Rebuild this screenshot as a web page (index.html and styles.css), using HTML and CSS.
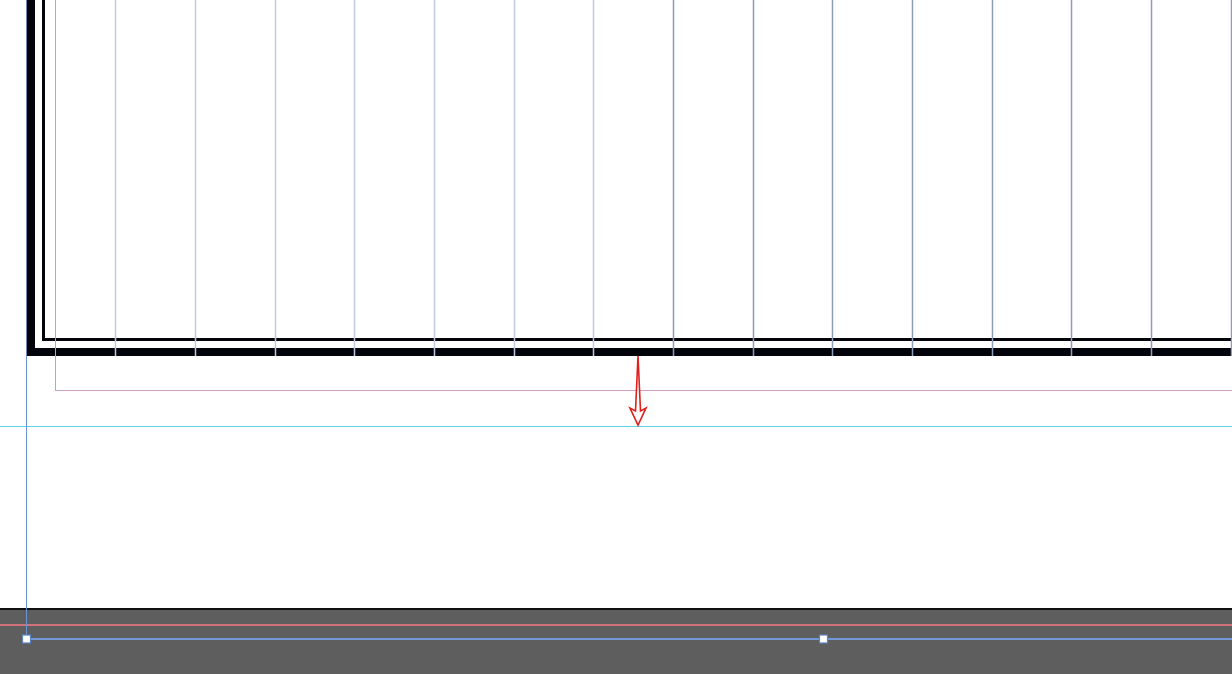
FILE: index.html
```html
<!DOCTYPE html>
<html lang="en">
<head>
    <meta charset="UTF-8">
    <meta name="viewport" content="width=device-width, initial-scale=1.0">
    <title>Layout view</title>
    <link rel="stylesheet" href="styles.css">
</head>
<body>

    <div class="workspace">
        <!-- page area (white) -->
        <div class="page-area"></div>
        <!-- pasteboard (grey) -->
        <div class="pasteboard"></div>

        <!-- guides, frame and selection drawn on top -->
        <svg class="overlay" width="1232" height="674" viewBox="0 0 1232 674">
            <!-- frame bars -->
            <rect class="bar" x="27" y="0" width="8" height="356"/>
            <rect class="bar" x="27" y="348" width="1205" height="8"/>
            <rect class="bar" x="42" y="0" width="3" height="341"/>
            <rect class="bar" x="42" y="338" width="1190" height="3"/>
            <line class="bar-edge" x1="26.5" y1="0" x2="26.5" y2="356"/>

            <!-- column guides -->
            <g class="col-light">
                <line x1="115.5" y1="0" x2="115.5" y2="356"/>
                <line x1="195.5" y1="0" x2="195.5" y2="356"/>
                <line x1="275.5" y1="0" x2="275.5" y2="356"/>
                <line x1="354.5" y1="0" x2="354.5" y2="356"/>
                <line x1="434.5" y1="0" x2="434.5" y2="356"/>
                <line x1="514.5" y1="0" x2="514.5" y2="356"/>
                <line x1="593.5" y1="0" x2="593.5" y2="356"/>
            </g>
            <g class="col-dark">
                <line x1="673.5" y1="0" x2="673.5" y2="356"/>
                <line x1="753.5" y1="0" x2="753.5" y2="356"/>
                <line x1="832.5" y1="0" x2="832.5" y2="356"/>
                <line x1="912.5" y1="0" x2="912.5" y2="356"/>
                <line x1="992.5" y1="0" x2="992.5" y2="356"/>
                <line x1="1071.5" y1="0" x2="1071.5" y2="356"/>
                <line x1="1151.5" y1="0" x2="1151.5" y2="356"/>
                <line x1="1231.5" y1="0" x2="1231.5" y2="356"/>
            </g>

            <!-- margin guide -->
            <line class="margin-v" x1="55.5" y1="0" x2="55.5" y2="391"/>
            <line class="margin-h" x1="55" y1="390.5" x2="1232" y2="390.5"/>

            <!-- ruler guide -->
            <line class="ruler-guide" x1="0" y1="426.5" x2="1232" y2="426.5"/>

            <!-- arrow -->
            <path class="arrow" d="M638 356 L635.5 411 L630 408 L638 425 L646 408 L640.5 411 Z"/>

            <!-- bleed line on pasteboard -->
            <line class="bleed" x1="0" y1="625" x2="1232" y2="625"/>

            <!-- selection -->
            <line class="sel" x1="26.5" y1="356" x2="26.5" y2="639"/>
            <line class="sel sel-h" x1="26" y1="639" x2="1232" y2="639"/>
            <rect class="handle" x="22.5" y="635" width="8" height="8"/>
            <rect class="handle" x="819.5" y="635" width="8" height="8"/>
        </svg>
    </div>

</body>
</html>
```

FILE: styles.css
```css
body {
    margin: 0;
    overflow: hidden;
    font-family: "Liberation Sans", Arial, sans-serif;
}

.workspace {
    position: relative;
    width: 1232px;
    height: 674px;
    display: flex;
    flex-direction: column;
}

.page-area {
    height: 608px;
    background-color: #ffffff;
}

.pasteboard {
    flex: 1;
    background-color: #5e5e5e;
    border-top: 2px solid #111111;
}

.overlay {
    position: absolute;
    top: 0;
    left: 0;
}

.bar {
    fill: #03030c;
}

.bar-edge {
    stroke: #6f86b8;
    stroke-width: 1;
}

.col-light line {
    stroke: #bfcade;
    stroke-width: 1.5;
}

.col-dark line {
    stroke: #8e9cb6;
    stroke-width: 1.5;
}

.margin-v {
    stroke: #aea6d2;
    stroke-width: 1;
}

.margin-h {
    stroke: #cf9fcb;
    stroke-width: 1;
}

.ruler-guide {
    stroke: #5fd2e2;
    stroke-width: 1;
}

.arrow {
    fill: #ffffff;
    stroke: #e0201c;
    stroke-width: 1.6;
    stroke-linejoin: miter;
}

.bleed {
    stroke: #d0727a;
    stroke-width: 2;
}

.sel {
    stroke: #6a92d4;
    stroke-width: 1;
}

.sel-h {
    stroke: #7298d8;
    stroke-width: 2;
}

.handle {
    fill: #ffffff;
    stroke: #5a82c4;
    stroke-width: 1.2;
}
```
